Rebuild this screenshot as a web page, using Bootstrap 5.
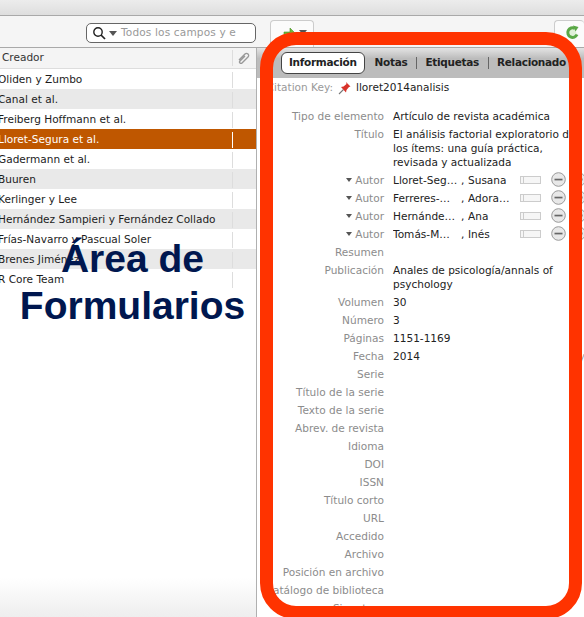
<!DOCTYPE html>
<html lang="es">
<head>
    <meta charset="UTF-8">
    <meta name="viewport" content="width=device-width, initial-scale=1.0">
    <title>Área de Formularios</title>
    <link href="https://cdn.jsdelivr.net/npm/bootstrap@5.3.0/dist/css/bootstrap.min.css" rel="stylesheet">
    <style>
        html, body { height: 617px; overflow: hidden; }
        body { font-family: "DejaVu Sans", sans-serif; font-size: 10.55px; color: #222; background: #fff; position: relative; }
        .top-band { height: 16px; background: linear-gradient(#ececec, #dedede); border-bottom: 1px solid #a9a9a9; }
        .tool-bar { height: 32px; background: #f5f5f5; border-bottom: 1px solid #a9a9a9; padding-top: 4px; }
        .search-box { margin-left: 86px; margin-top: 3px; width: 170px; height: 20px; border: 1px solid #666; border-radius: 5px; background: #fff; color: #999; letter-spacing: .15px; white-space: nowrap; overflow: hidden; padding-left: 5px; gap: 3px; }
        .search-text { margin-left: 1px; }
        .tool-btn { height: 27px; border: 1px solid #ccc; border-bottom: 0; border-radius: 4px 4px 0 0; background: #fbfbfb; }
        .tool-btn-a { margin-left: 14px; width: 44px; padding: 7px 0 0 12px; gap: 2px; }
        .tool-btn-a .tri-down { margin-top: 2px; }
        .tool-btn-b { margin-left: auto; width: 30px; padding: 4px 0 0 10px; border-right: 0; }
        .tri-down { width: 0; height: 0; border-left: 4px solid transparent; border-right: 4px solid transparent; border-top: 5px solid #555; flex: none; }
        .split { height: 569px; }
        .left-pane { width: 257px; border-right: 1px solid #b0b0b0; flex: none; background: linear-gradient(#fff 530px, #eee); }
        .head-row { height: 21px; background: #f4f4f4; border-bottom: 1px solid #ddd; color: #333; }
        .list-row { height: 20px; color: #1c1c1c; white-space: nowrap; padding-top: 2px; }
        .list-row.alt { background: #e9e9e9; }
        .list-row.sel { background: #bf5700; color: #fff; }
        .cell-name { width: 232px; padding-left: 0; flex: none; text-indent: -2px; }
        .head-row .cell-name { text-indent: 2px; }
        .cell-clip { width: 1px; height: 16px; background: #ddd; flex: none; }
        .list-row.sel .cell-clip { background: #fff; }
        .right-pane { flex: 1 1 auto; min-width: 0; }
        .tab-strip { height: 30px; background: linear-gradient(#e4e4e4, #bcbcbc 35%); padding-left: 24px; font-weight: 700; font-size: 10.5px; letter-spacing: -.3px; color: #222; white-space: nowrap; }
        .tab-on { background: #fff; border: 1px solid #444; border-radius: 6px; height: 22px; padding: 0 7px; margin-right: 10px; }
        .tab-sep { width: 1px; height: 12px; background: #666; margin: 0 8.5px; flex: none; }
        .key-row { height: 20px; white-space: nowrap; }
        .key-label { width: 76px; text-align: right; color: #999; margin-right: 5px; flex: none; }
        .key-pin { margin-right: 5px; flex: none; }
        .form-rows { padding-top: 9px; }
        .form-row { min-height: 18px; white-space: nowrap; line-height: 14px; padding: 2px 0; }
        .field-label { width: 127px; text-align: right; color: #8c8c8c; flex: none; display: flex; justify-content: flex-end; align-items: center; gap: 3px; height: 14px; }
        .field-value { margin-left: 9px; white-space: nowrap; }
        .name-last { width: 68px; flex: none; overflow: hidden; }
        .name-comma { width: 7px; flex: none; }
        .name-first { width: 47px; flex: none; overflow: hidden; }
        .switch-mini { width: 21px; height: 8px; border: 1px solid #ccc; background: #f6f6f6; margin-left: 5px; margin-top: 3px; flex: none; position: relative; }
        .switch-mini::before { content: ""; position: absolute; left: 2px; top: 0; bottom: 0; width: 1px; background: #ccc; }
        .minus-btn { margin-left: 10px; margin-top: -1px; flex: none; }
        .plus-btn { margin-left: 5px; margin-top: -1px; flex: none; }
        .date-hint { margin-left: 159px; color: #999; }
        .big-note { position: absolute; left: 0; top: 235px; width: 265px; text-align: center; font-family: "Liberation Sans", Arial, sans-serif; font-weight: 700; font-size: 39px; line-height: 47px; color: #00174f; }
        .red-frame { position: absolute; left: 260px; top: 32px; width: 322px; height: 587px; border: 13px solid #ff3300; border-radius: 36px; }
    </style>
</head>
<body>
    <div class="top-band"></div>
    <div class="tool-bar d-flex align-items-start">
        <div class="search-box d-flex align-items-center">
            <svg width="14" height="14" viewBox="0 0 14 14" class="flex-none"><circle cx="6" cy="6" r="4.200" fill="none" stroke="#222" stroke-width="1.400"/><path d="M9 9l4 4" stroke="#222" stroke-width="1.700"/></svg>
            <span class="tri-down"></span>
            <span class="search-text">Todos los campos y e</span>
        </div>
        <div class="tool-btn tool-btn-a d-flex align-items-start">
            <svg width="14" height="12" viewBox="0 0 14 12"><path d="M1 4h6V0l6 6-6 6V8H1z" fill="#6cbb3c" stroke="#4a8f25" stroke-width=".6"/></svg>
            <span class="tri-down"></span>
        </div>
        <div class="tool-btn tool-btn-b d-flex align-items-start">
            <svg width="15" height="15" viewBox="0 0 15 15"><path d="M12 9.500A4.800 4.800 0 1 1 9.800 3.300" fill="#dff0d8" stroke="#5aa846" stroke-width="3"/><path d="M8 .5l5.500 1.500-3 4.500z" fill="#5aa846"/></svg>
        </div>
    </div>
    <div class="split d-flex">
        <div class="left-pane">
            <div class="head-row d-flex align-items-center">
                <div class="cell-name">Creador</div>
                <div class="cell-clip"></div>
                <svg class="ms-1" width="13" height="12" viewBox="0 0 13 12"><path d="M2 8l6-6a2 2 0 0 1 3 3l-6 6a1.200 1.200 0 0 1-2-2l5-5" fill="none" stroke="#999" stroke-width="1.400"/></svg>
            </div>
            <div id="creatorList"></div>
        </div>
        <div class="right-pane">
            <div class="tab-strip d-flex align-items-center">
                <div class="tab-on d-flex align-items-center">Información</div>
                <span>Notas</span><span class="tab-sep"></span>
                <span>Etiquetas</span><span class="tab-sep"></span>
                <span>Relacionado</span>
            </div>
            <div class="key-row d-flex align-items-center">
                <div class="key-label">Citation Key:</div>
                <svg class="key-pin" width="13" height="14" viewBox="0 0 13 14"><path d="M1 13l4.500-4.500" stroke="#777" stroke-width="1.100"/><path d="M8 1l4.500 4.500-1.500.5-2.500 3 -.5 2.500L3 6l2.500-.5 3-2.500z" fill="#d8322a"/></svg>
                <div>lloret2014analisis</div>
            </div>
            <div class="form-rows" id="formRows"></div>
        </div>
    </div>
    <div class="big-note">Área de<br>Formularios</div>
    <div class="red-frame"></div>

    <script src="https://cdn.jsdelivr.net/npm/bootstrap@5.3.0/dist/js/bootstrap.bundle.min.js"></script>
    <script>
        const creators = ['Oliden y Zumbo', 'Canal et al.', 'Freiberg Hoffmann et al.', 'Lloret-Segura et al.', 'Gadermann et al.', 'Buuren', 'Kerlinger y Lee', 'Hernández Sampieri y Fernández Collado', 'Frías-Navarro y Pascual Soler', 'Brenes Jiménez', 'R Core Team'];
        document.getElementById('creatorList').innerHTML = creators.map((name, i) => {
            const cls = i === 3 ? 'sel' : (i % 2 ? 'alt' : '');
            return `<div class="list-row ${cls} d-flex align-items-center"><div class="cell-name">${name}</div><div class="cell-clip"></div></div>`;
        }).join('');

        const circleBtn = (cls, bar) => `<svg class="${cls}" width="15" height="15" viewBox="0 0 15 15"><circle cx="7.500" cy="7.500" r="6.800" fill="#e8e8e8" stroke="#999"/>${bar}</svg>`;
        const minus = circleBtn('minus-btn', '<rect x="3.500" y="6.700" width="8" height="1.700" fill="#666"/>');
        const plus = circleBtn('plus-btn', '<path d="M3.500 6.500h3v-3h2v3h3v2h-3v3h-2v-3h-3z" fill="#666"/>');
        const tri = '<span class="tri-down" style="border-width:4px 3.500px 0"></span>';
        const authors = [['Lloret-Seg…', 'Susana'], ['Ferreres-…', 'Adora…'], ['Hernánde…', 'Ana'], ['Tomás-M…', 'Inés']];
        const rows = [
            ['Tipo de elemento', 'Artículo de revista académica'],
            ['Título', 'El análisis factorial exploratorio de<br>los ítems: una guía práctica,<br>revisada y actualizada'],
            ...authors.map(a => ['author', a]),
            ['Resumen', ''],
            ['Publicación', 'Anales de psicología/annals of<br>psychology'],
            ['Volumen', '30'], ['Número', '3'], ['Páginas', '1151-1169'], ['Fecha', '2014<span class="date-hint">y m d</span>'],
            ['Serie', ''], ['Título de la serie', ''], ['Texto de la serie', ''], ['Abrev. de revista', ''],
            ['Idioma', ''], ['DOI', ''], ['ISSN', ''], ['Título corto', ''], ['URL', ''], ['Accedido', ''],
            ['Archivo', ''], ['Posición en archivo', ''], ['Catálogo de biblioteca', ''], ['Signatura', '']
        ];
        document.getElementById('formRows').innerHTML = rows.map(([label, value]) => {
            if (label === 'author') {
                return `<div class="form-row d-flex"><div class="field-label">${tri}Autor</div><div class="field-value d-flex"><span class="name-last">${value[0]}</span><span class="name-comma">,</span><span class="name-first">${value[1]}</span></div><span class="switch-mini"></span>${minus}${plus}</div>`;
            }
            return `<div class="form-row d-flex"><div class="field-label">${label}</div><div class="field-value">${value}</div></div>`;
        }).join('');
    </script>
</body>
</html>
